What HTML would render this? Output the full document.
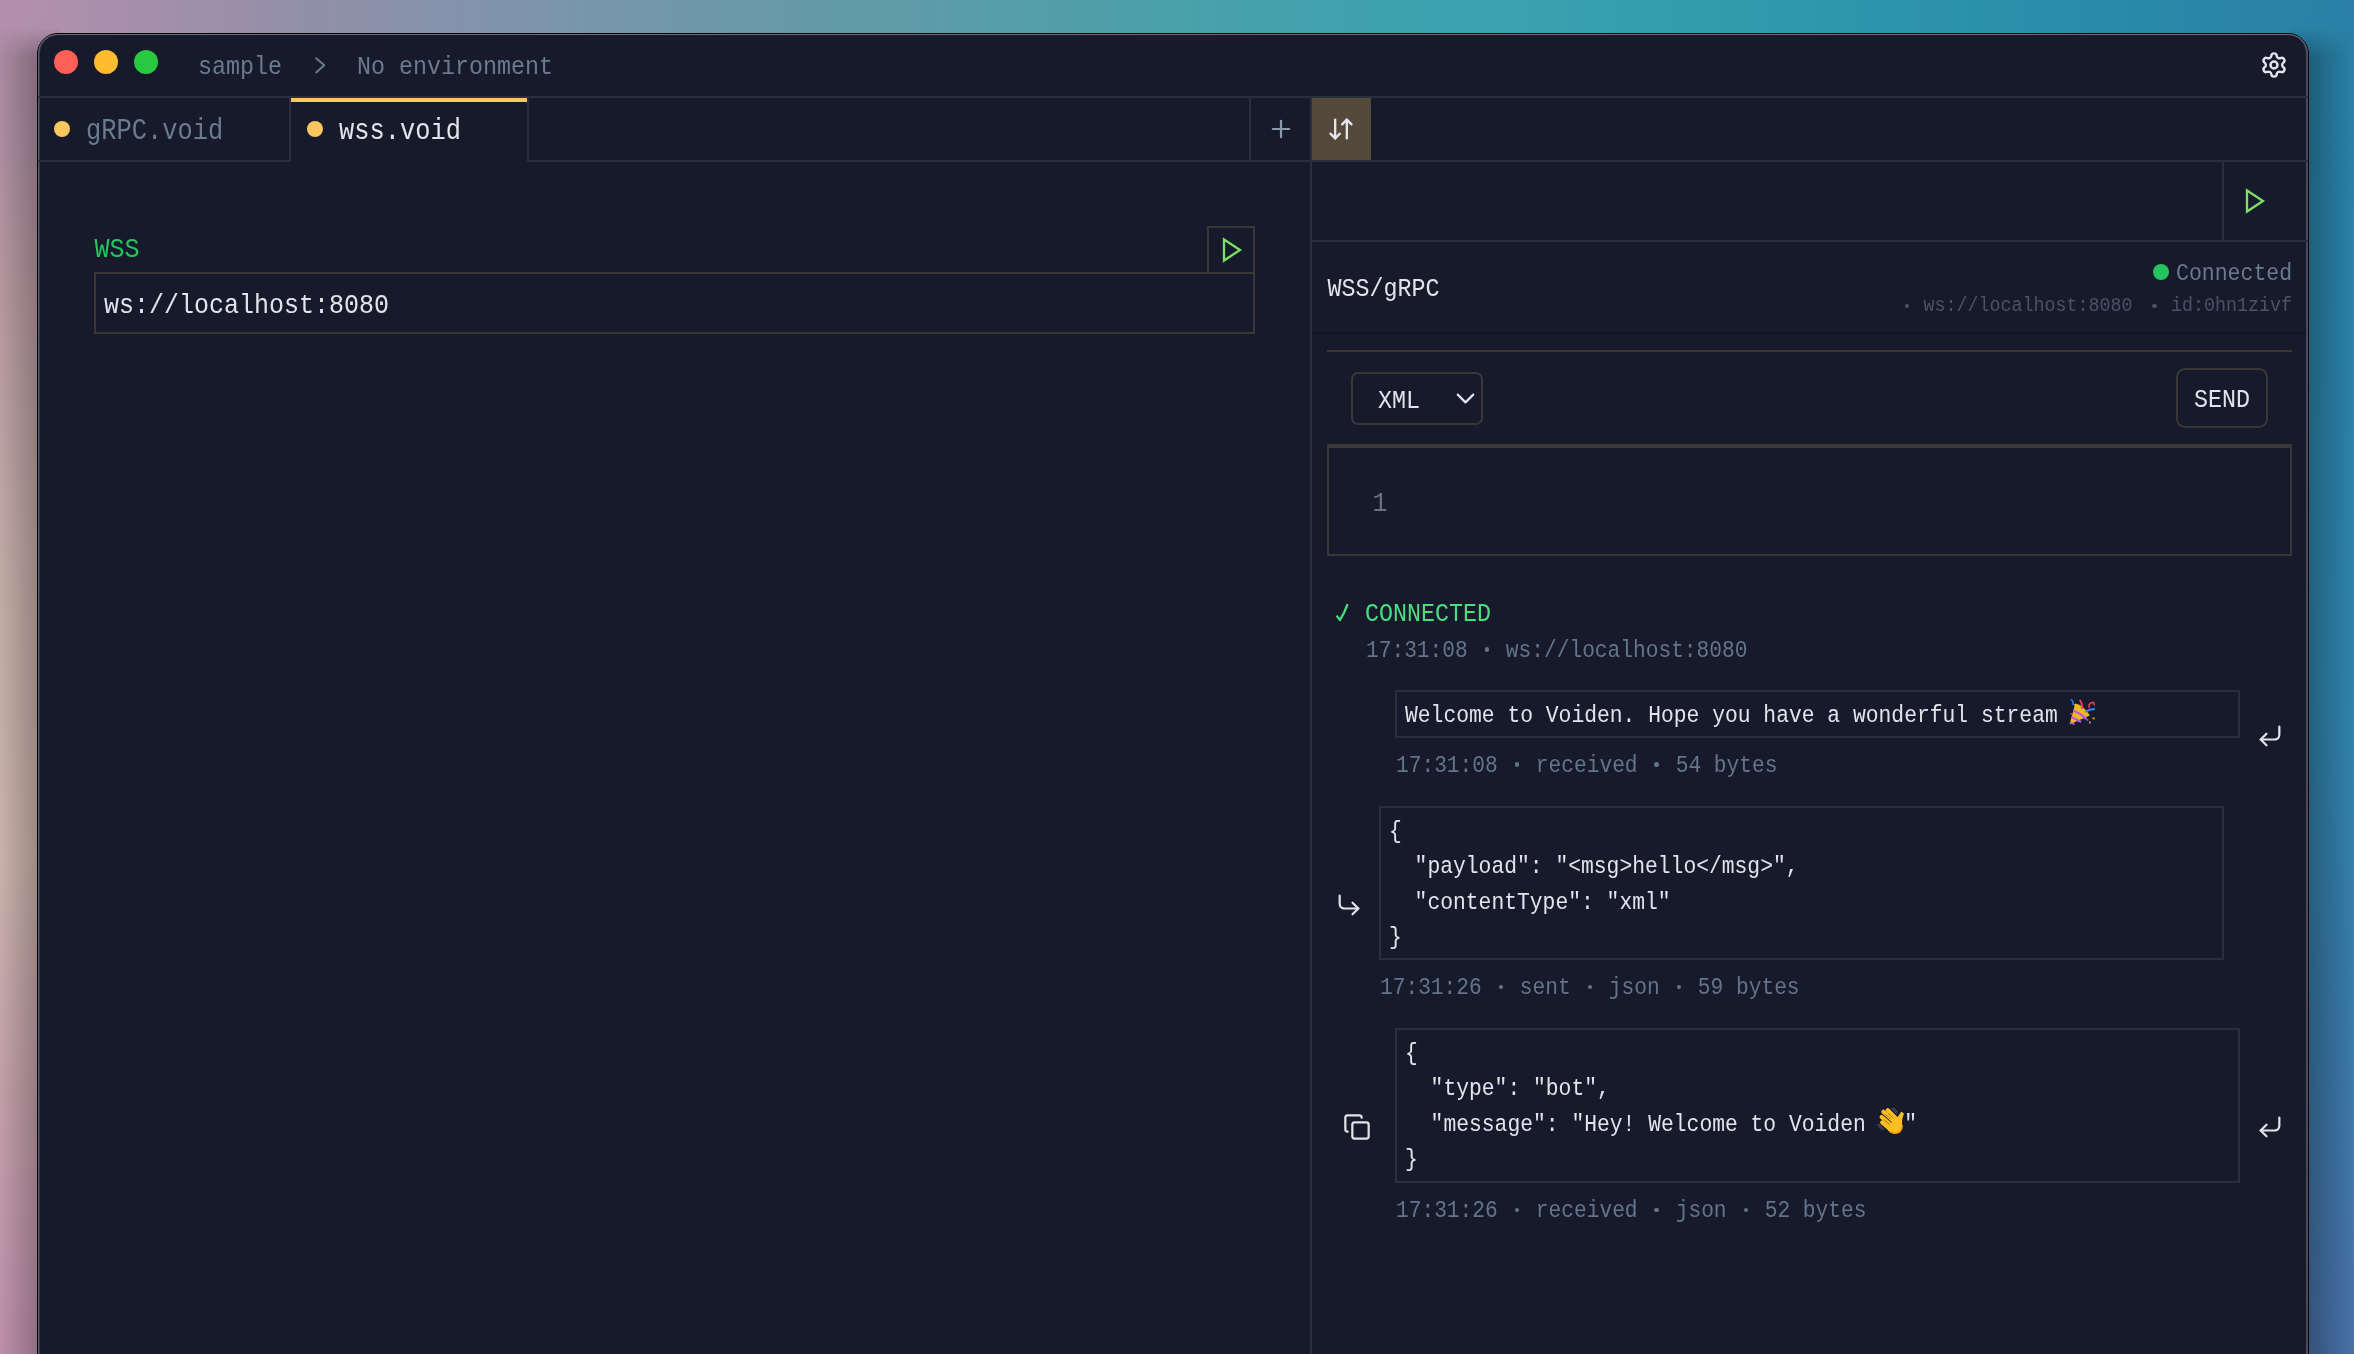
<!DOCTYPE html>
<html>
<head>
<meta charset="utf-8">
<style>
html,body{margin:0;padding:0;width:2354px;height:1354px;overflow:hidden;}
body{position:relative;font-family:"Liberation Mono",monospace;
  background:linear-gradient(90deg,#b590ad 0px,#a48fab 150px,#928fa8 300px,#8094ad 500px,#6e98a8 700px,#559ea8 1015px,#45a1ac 1250px,#3aa2b0 1500px,#2f98ac 1800px,#2a90aa 2000px,#2a86a8 2200px,#2a80a8 2354px);}
.bgl{position:absolute;left:0;top:0;width:60px;height:1354px;
  background:linear-gradient(180deg,#b28fac 0px,#b08ea9 40px,#b090a5 110px,#bc9ea4 310px,#c8b0aa 570px,#d0b8b0 860px,#c8a4ae 1100px,#c494b0 1354px);
  -webkit-mask-image:linear-gradient(180deg,transparent 0,transparent 20px,#000 40px);mask-image:linear-gradient(180deg,transparent 0,transparent 20px,#000 40px);}
.bgr{position:absolute;left:2290px;top:0;width:64px;height:1354px;
  background:linear-gradient(180deg,#2a82a8 0px,#2a82a8 110px,#2d84ab 420px,#3085ae 710px,#3a7cab 1020px,#4a72a8 1354px);
  -webkit-mask-image:linear-gradient(180deg,transparent 0,transparent 20px,#000 40px);mask-image:linear-gradient(180deg,transparent 0,transparent 20px,#000 40px);}
.shl{position:absolute;left:0;top:28px;width:60px;height:1326px;background:linear-gradient(90deg,rgba(0,0,0,.03) 0,rgba(0,0,0,.25) 37px,rgba(0,0,0,.25) 60px);
  -webkit-mask-image:linear-gradient(180deg,transparent 0,#000 30px);mask-image:linear-gradient(180deg,transparent 0,#000 30px);}
.shr{position:absolute;left:2290px;top:28px;width:64px;height:1326px;background:linear-gradient(90deg,rgba(0,0,0,.27) 0,rgba(0,0,0,.27) 19px,rgba(0,0,0,0) 64px);
  -webkit-mask-image:linear-gradient(180deg,transparent 0,#000 30px);mask-image:linear-gradient(180deg,transparent 0,#000 30px);}
.win{position:absolute;left:37px;top:33px;width:2272px;height:1400px;box-sizing:border-box;
  border:1px solid #000;border-radius:21px;background:#171a2b;}
.win::after{content:"";position:absolute;left:0;top:0;right:0;bottom:0;border-radius:20px;
  box-shadow:inset 0 1px 0 #6c6c7a,inset 1px 0 0 #585c6e,inset 2px 0 0 #34384a,inset -2px 0 0 #4a4a5a;pointer-events:none;}
.a{position:absolute;white-space:pre;line-height:1;transform:scaleY(1.14);transform-origin:0 0.7661em;}
.ln{position:absolute;}
svg{position:absolute;overflow:visible;}
</style>
</head>
<body>
<div class="bgl"></div>
<div class="bgr"></div>
<div class="shl"></div>
<div class="shr"></div>
<div class="win"></div>
<div class="ln" style="left:54px;top:50px;width:24px;height:24px;border-radius:50%;background:#ff5f57"></div>
<div class="ln" style="left:94px;top:50px;width:24px;height:24px;border-radius:50%;background:#febc2e"></div>
<div class="ln" style="left:134px;top:50px;width:24px;height:24px;border-radius:50%;background:#28c840"></div>
<div class="a" style="left:198px;top:57.13px;font-size:23.33px;color:#6b7a8e;">sample</div>
<svg style="left:309px;top:53px" width="22" height="22" viewBox="0 0 22 22" fill="none" stroke="#6b7a8e" stroke-width="2" stroke-linecap="round" stroke-linejoin="round"><path d="M7.2 5.2 L15.2 12.3 L7.2 19.4"/></svg>
<div class="a" style="left:357px;top:57.13px;font-size:23.33px;color:#6b7a8e;">No environment</div>
<svg style="left:2260px;top:51px" width="28" height="28" viewBox="0 0 24 24" fill="none" stroke="#e2e4ec" stroke-width="2.1" stroke-linecap="round" stroke-linejoin="round"><path d="M9.671 4.136a2.34 2.34 0 0 1 4.659 0 2.34 2.34 0 0 0 3.319 1.915 2.34 2.34 0 0 1 2.33 4.033 2.34 2.34 0 0 0 0 3.831 2.34 2.34 0 0 1-2.33 4.033 2.34 2.34 0 0 0-3.319 1.915 2.34 2.34 0 0 1-4.659 0 2.34 2.34 0 0 0-3.32-1.915 2.34 2.34 0 0 1-2.33-4.033 2.34 2.34 0 0 0 0-3.831A2.34 2.34 0 0 1 6.35 6.051a2.34 2.34 0 0 0 3.319-1.915"/><circle cx="12" cy="12" r="3"/></svg>
<div class="ln" style="left:38px;top:96px;width:2270px;height:2px;background:#2a2f40;"></div>
<div class="ln" style="left:38px;top:160px;width:253px;height:2px;background:#2a2f40;"></div>
<div class="ln" style="left:289px;top:98px;width:2px;height:64px;background:#2a2f40;"></div>
<div class="ln" style="left:291px;top:98px;width:236px;height:4px;background:#fcc65e;"></div>
<div class="ln" style="left:527px;top:98px;width:2px;height:64px;background:#2a2f40;"></div>
<div class="ln" style="left:527px;top:160px;width:1781px;height:2px;background:#2a2f40;"></div>
<div class="ln" style="left:1249px;top:98px;width:2px;height:62px;background:#2a2f40;"></div>
<div class="ln" style="left:1310px;top:98px;width:2px;height:1300px;background:#2a2f40;"></div>
<div class="ln" style="left:1312px;top:98px;width:59px;height:62px;background:#54493b;"></div>
<div class="ln" style="left:54px;top:121px;width:16px;height:16px;border-radius:50%;background:#fcc65e"></div>
<div class="a" style="left:86px;top:119.54px;font-size:25.4px;color:#6b7a8e;">gRPC.void</div>
<div class="ln" style="left:307px;top:121px;width:16px;height:16px;border-radius:50%;background:#fcc65e"></div>
<div class="a" style="left:339px;top:119.54px;font-size:25.4px;color:#e2e4ec;">wss.void</div>
<svg style="left:1267px;top:115px" width="28" height="28" viewBox="0 0 24 24" fill="none" stroke="#8a9aae" stroke-width="1.9" stroke-linecap="round"><path d="M5 12h14M12 5v14"/></svg>
<svg style="left:1327px;top:115px" width="28" height="28" viewBox="0 0 24 24" fill="none" stroke="#e5e6ee" stroke-width="2" stroke-linecap="round" stroke-linejoin="round"><path d="m3 16 4 4 4-4"/><path d="M7 20V4"/><path d="m21 8-4-4-4 4"/><path d="M17 4v16"/></svg>
<div class="a" style="left:94.5px;top:237.85px;font-size:25px;color:#22c55e;">WSS</div>
<div class="ln" style="left:1207px;top:226px;width:48px;height:48px;box-sizing:border-box;border:2px solid #3a3837;border-bottom:none"></div>
<div class="ln" style="left:94px;top:272px;width:1161px;height:62px;box-sizing:border-box;border:2px solid #3a3837"></div>
<svg style="left:1219px;top:236px" width="28" height="28" viewBox="0 0 28 28" fill="none" stroke="#7ddf64" stroke-width="2.3" stroke-linejoin="miter"><path d="M5 3.5 L21 14 L5 24.5 Z"/></svg>
<div class="a" style="left:104px;top:293.85px;font-size:25px;color:#e2e4ec;">ws://localhost:8080</div>
<div class="ln" style="left:1312px;top:240px;width:996px;height:2px;background:#2a2f40;"></div>
<div class="ln" style="left:2222px;top:162px;width:2px;height:78px;background:#2a2f40;"></div>
<svg style="left:2241px;top:187px" width="28" height="28" viewBox="0 0 28 28" fill="none" stroke="#7ddf64" stroke-width="2.3" stroke-linejoin="miter"><path d="M6 3.5 L22 14 L6 24.5 Z"/></svg>
<div class="a" style="left:1327.5px;top:279.13px;font-size:23.33px;color:#e2e4ec;">WSS/gRPC</div>
<div class="ln" style="left:2153px;top:264px;width:16px;height:16px;border-radius:50%;background:#22c55e"></div>
<div class="a" style="left:2176px;top:263.53px;font-size:21.5px;color:#6b7a8e;">Connected</div>
<div class="a" style="left:1901.5px;top:298.46px;font-size:18.33px;color:#4a5366;">  ws://localhost:8080</div>
<div class="ln" style="left:1904.90px;top:304.20px;width:4.2px;height:4.2px;border-radius:50%;background:#4a5366"></div>
<div class="a" style="left:2149px;top:298.46px;font-size:18.33px;color:#4a5366;">  id:0hn1zivf</div>
<div class="ln" style="left:2152.40px;top:304.20px;width:4.2px;height:4.2px;border-radius:50%;background:#4a5366"></div>
<div class="ln" style="left:1312px;top:332px;width:994px;height:2px;background:#121522;"></div>
<div class="ln" style="left:1327px;top:350px;width:965px;height:2px;background:#3a3837;"></div>
<div class="ln" style="left:1351px;top:372px;width:132px;height:53px;box-sizing:border-box;border:2px solid #3a3837;border-radius:7px"></div>
<div class="a" style="left:1378px;top:391.13px;font-size:23.33px;color:#e2e4ec;">XML</div>
<svg style="left:1450px;top:383px" width="31" height="31" viewBox="0 0 24 24" fill="none" stroke="#e5e6ee" stroke-width="1.7" stroke-linecap="round" stroke-linejoin="round"><path d="m6 9 6 6 6-6"/></svg>
<div class="ln" style="left:2176px;top:368px;width:92px;height:60px;box-sizing:border-box;border:2px solid #3a3837;border-radius:9px"></div>
<div class="a" style="left:2194px;top:390.13px;font-size:23.33px;color:#e2e4ec;">SEND</div>
<div class="ln" style="left:1327px;top:444px;width:965px;height:112px;box-sizing:border-box;border:2px solid #3a3837;border-top-width:4px"></div>
<div class="a" style="left:1372.5px;top:492.35px;font-size:25px;color:#6b7280;">1</div>
<svg style="left:1330px;top:600px" width="24" height="24" viewBox="1330 600 24 24" fill="none" stroke="#4ade80" stroke-width="2.3" stroke-linejoin="round"><path d="M1336.6 615.6 L1340 620 Q1344.5 613 1347.6 604.2"/></svg>
<div class="a" style="left:1365px;top:604.13px;font-size:23.33px;color:#4ade80;">CONNECTED</div>
<div class="a" style="left:1366px;top:640.76px;font-size:21.2px;color:#64748b;">17:31:08   ws://localhost:8080</div>
<div class="ln" style="left:1484.54px;top:647.10px;width:4.6px;height:4.6px;border-radius:50%;background:#64748b"></div>
<div class="ln" style="left:1395px;top:690px;width:845px;height:48px;box-sizing:border-box;border:2px solid #2a2f40"></div>
<div class="a" style="left:1405px;top:705.66px;font-size:21.33px;color:#e2e4ec;">Welcome to Voiden. Hope you have a wonderful stream</div>
<svg style="left:2066px;top:696px" width="32" height="32" viewBox="0 0 32 32">
<path d="M3.6 28.5 L9.2 7.6 Q17 9 23.8 19.4 Z" fill="#f2b91c"/>
<path d="M9.2 7.6 Q17 9 23.8 19.4 Q21 13 9.2 7.6 Z" fill="#e08a10"/>
<path d="M7.4 14.5 Q14 17 20.5 23" stroke="#b45cf0" stroke-width="2.4" fill="none"/>
<path d="M5.6 21 Q10.5 23.5 15 26" stroke="#b45cf0" stroke-width="2.2" fill="none"/>
<path d="M4.2 26.5 Q6.5 27.5 8.5 28.4" stroke="#b45cf0" stroke-width="1.6" fill="none"/>
<path d="M13.5 4 Q16.5 6.5 16 13" stroke="#f0436a" stroke-width="1.8" fill="none"/>
<path d="M19 16 Q23.5 13 29 13" stroke="#3b82f6" stroke-width="2" fill="none"/>
<path d="M23.5 12 Q22 8.5 25 7 Q29 5 28 9.5" stroke="#e0405e" stroke-width="1.6" fill="none"/>
<path d="M4.5 3.5 Q8.5 5 6.5 9" stroke="#2f6fe0" stroke-width="1.8" fill="none"/>
<rect x="8.3" y="8" width="1.8" height="1.8" fill="#facc15"/>
<rect x="26.5" y="21.5" width="2.2" height="1.8" fill="#f59e0b"/>
<rect x="23" y="25.5" width="1.8" height="2" fill="#f472b6"/>
<rect x="20.5" y="23" width="1.8" height="1.8" fill="#3b82f6"/>
<rect x="4.3" y="17" width="1.8" height="1.6" fill="#e0405e"/>
</svg>
<svg style="left:2256px;top:722px" width="28" height="28" viewBox="0 0 24 24" fill="none" stroke="#e2e4ec" stroke-width="1.9" stroke-linecap="round" stroke-linejoin="round"><polyline points="9 10 4 15 9 20"/><path d="M20 4v7a4 4 0 0 1-4 4H4"/></svg>
<div class="a" style="left:1396px;top:755.96px;font-size:21.2px;color:#64748b;">17:31:08   received   54 bytes</div>
<div class="ln" style="left:1514.54px;top:762.30px;width:4.6px;height:4.6px;border-radius:50%;background:#64748b"></div>
<div class="ln" style="left:1654.46px;top:762.30px;width:4.6px;height:4.6px;border-radius:50%;background:#64748b"></div>
<div class="ln" style="left:1379px;top:806px;width:845px;height:154px;box-sizing:border-box;border:2px solid #2a2f40"></div>
<div class="a" style="left:1389px;top:821.56px;font-size:21.33px;color:#e2e4ec;">{</div>
<div class="a" style="left:1389px;top:857.06px;font-size:21.33px;color:#e2e4ec;">  "payload": "&lt;msg&gt;hello&lt;/msg&gt;",</div>
<div class="a" style="left:1389px;top:892.56px;font-size:21.33px;color:#e2e4ec;">  "contentType": "xml"</div>
<div class="a" style="left:1389px;top:928.06px;font-size:21.33px;color:#e2e4ec;">}</div>
<svg style="left:1335px;top:891px" width="28" height="28" viewBox="0 0 24 24" fill="none" stroke="#e2e4ec" stroke-width="1.9" stroke-linecap="round" stroke-linejoin="round"><polyline points="15 10 20 15 15 20"/><path d="M4 4v7a4 4 0 0 0 4 4h12"/></svg>
<div class="a" style="left:1380px;top:978.36px;font-size:21.2px;color:#64748b;">17:31:26   sent   json   59 bytes</div>
<div class="ln" style="left:1498.54px;top:984.70px;width:4.6px;height:4.6px;border-radius:50%;background:#64748b"></div>
<div class="ln" style="left:1587.58px;top:984.70px;width:4.6px;height:4.6px;border-radius:50%;background:#64748b"></div>
<div class="ln" style="left:1676.62px;top:984.70px;width:4.6px;height:4.6px;border-radius:50%;background:#64748b"></div>
<div class="ln" style="left:1395px;top:1028px;width:845px;height:155px;box-sizing:border-box;border:2px solid #2a2f40"></div>
<div class="a" style="left:1405px;top:1043.56px;font-size:21.33px;color:#e2e4ec;">{</div>
<div class="a" style="left:1405px;top:1079.06px;font-size:21.33px;color:#e2e4ec;">  "type": "bot",</div>
<div class="a" style="left:1405px;top:1114.56px;font-size:21.33px;color:#e2e4ec;">  "message": "Hey! Welcome to Voiden   "</div>
<div class="a" style="left:1405px;top:1150.06px;font-size:21.33px;color:#e2e4ec;">}</div>
<svg style="left:1865px;top:1100px" width="60" height="45" viewBox="0 0 60 45">
<g stroke-linecap="round">
<path d="M22 27 L31 18 L36.8 13.8 Q38.5 14.5 37.6 18 Q36.5 21 37.2 25 Q37.5 31 32 33.3 Q27 34.5 23.5 31 Z" fill="#fbbf24"/>
<line x1="17.2" y1="22.5" x2="26" y2="30" stroke="#fbbf24" stroke-width="4.2"/>
<line x1="16.6" y1="17" x2="27" y2="26" stroke="#fbbf24" stroke-width="4.2"/>
<line x1="18.4" y1="11.8" x2="29" y2="21.5" stroke="#fbbf24" stroke-width="4.2"/>
<line x1="22.8" y1="10.2" x2="31" y2="18.5" stroke="#fbbf24" stroke-width="4.2"/>
<line x1="32.5" y1="21" x2="36.8" y2="14.2" stroke="#fbbf24" stroke-width="4"/>
<line x1="19" y1="19.6" x2="24.5" y2="24.2" stroke="#8a5a00" stroke-width="0.7"/>
<line x1="20.3" y1="14.4" x2="25.6" y2="19" stroke="#8a5a00" stroke-width="0.7"/>
<line x1="23.4" y1="13.4" x2="27.5" y2="17.6" stroke="#8a5a00" stroke-width="0.7"/>
<path d="M26 32 Q31 34.5 35 31.5 Q37 29 37.2 26" stroke="#f59e0b" stroke-width="1.6" fill="none"/>
<line x1="26.8" y1="8.2" x2="31.6" y2="13.6" stroke="#6b7280" stroke-width="0.8"/>
<line x1="28.6" y1="8" x2="32.4" y2="12.2" stroke="#6b7280" stroke-width="0.8"/>
<line x1="12.4" y1="24.6" x2="17.6" y2="30.2" stroke="#6b7280" stroke-width="0.8"/>
<line x1="14.2" y1="24.3" x2="18.6" y2="29" stroke="#6b7280" stroke-width="0.8"/>
</g>
</svg>
<svg style="left:1343px;top:1113px" width="28" height="28" viewBox="0 0 24 24" fill="none" stroke="#e2e4ec" stroke-width="1.9" stroke-linecap="round" stroke-linejoin="round"><rect width="14" height="14" x="8" y="8" rx="2" ry="2"/><path d="M4 16c-1.1 0-2-.9-2-2V4c0-1.1.9-2 2-2h10c1.1 0 2 .9 2 2"/></svg>
<svg style="left:2256px;top:1113px" width="28" height="28" viewBox="0 0 24 24" fill="none" stroke="#e2e4ec" stroke-width="1.9" stroke-linecap="round" stroke-linejoin="round"><polyline points="9 10 4 15 9 20"/><path d="M20 4v7a4 4 0 0 1-4 4H4"/></svg>
<div class="a" style="left:1396px;top:1201.26px;font-size:21.2px;color:#64748b;">17:31:26   received   json   52 bytes</div>
<div class="ln" style="left:1514.54px;top:1207.60px;width:4.6px;height:4.6px;border-radius:50%;background:#64748b"></div>
<div class="ln" style="left:1654.46px;top:1207.60px;width:4.6px;height:4.6px;border-radius:50%;background:#64748b"></div>
<div class="ln" style="left:1743.50px;top:1207.60px;width:4.6px;height:4.6px;border-radius:50%;background:#64748b"></div>
</body>
</html>
